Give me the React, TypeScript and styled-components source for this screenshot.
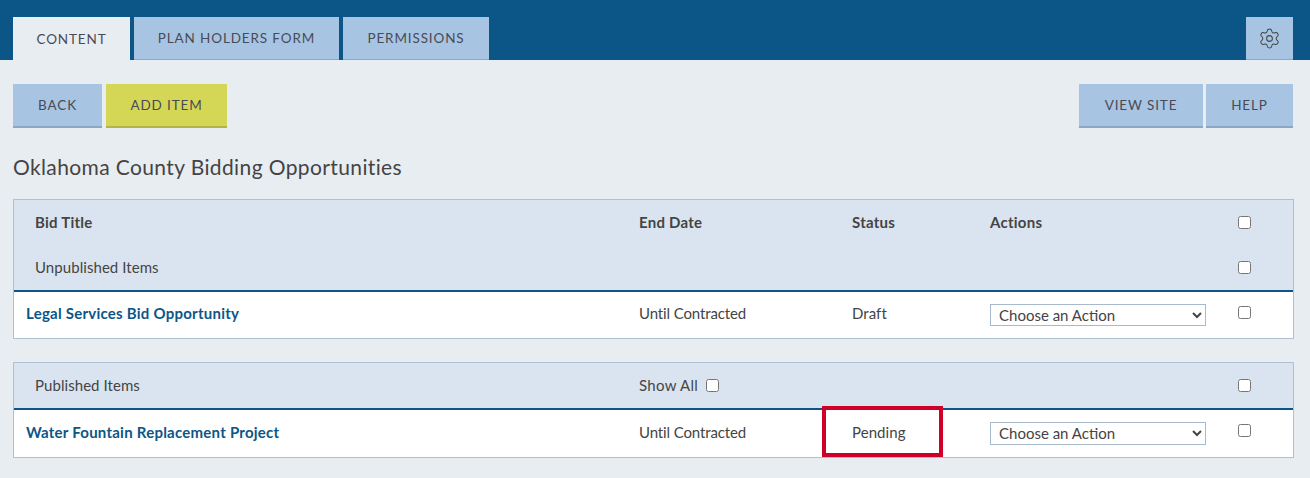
import React from "react";
import styled, { createGlobalStyle } from "styled-components";
import { Settings } from "lucide-react";

const Global = createGlobalStyle`
  html, body { margin: 0; padding: 0; background: #e8edf2; }
  body { font-family: "Lato", "Open Sans", sans-serif; color: #444; font-size: 15px; }
`;

const Page = styled.div`
  width: 1310px;
  height: 478px;
  overflow: hidden;
  position: relative;
`;

const TopBar = styled.header`
  height: 60px;
  box-sizing: border-box;
  padding: 17px 17px 0 13px;
  background: #0b5687;
  display: flex;
  justify-content: space-between;
`;

const Tabs = styled.nav`
  display: flex;
  gap: 4px;
`;

const Tab = styled.a<{ $active?: boolean; $w: number }>`
  width: ${p => p.$w}px;
  height: 43px;
  box-sizing: border-box;
  display: flex;
  align-items: center;
  justify-content: center;
  font-size: 13.5px;
  letter-spacing: 0.86px;
  color: #4a4a55;
  background: ${p => (p.$active ? "#e8edf2" : "#a7c5e3")};
  border-bottom: ${p => (p.$active ? "none" : "1px solid #8ba7c4")};
`;

const GearButton = styled.button`
  width: 47px;
  height: 43px;
  border: 0;
  border-bottom: 1px solid #8ba7c4;
  padding: 0;
  background: #a7c5e3;
  color: #444;
  display: flex;
  align-items: center;
  justify-content: center;
`;

const Content = styled.main`
  padding: 24px 17px 0 13px;
`;

const Toolbar = styled.div`
  display: flex;
  justify-content: space-between;
`;

const ButtonGroup = styled.div<{ $gap: number }>`
  display: flex;
  gap: ${p => p.$gap}px;
`;

const ActionButton = styled.a<{ $w: number; $accent?: boolean }>`
  width: ${p => p.$w}px;
  height: 44px;
  box-sizing: border-box;
  display: flex;
  align-items: center;
  justify-content: center;
  font-size: 13.5px;
  letter-spacing: 0.86px;
  color: #4a4a55;
  background: ${p => (p.$accent ? "#d4d755" : "#a7c5e3")};
  border-bottom: 2px solid ${p => (p.$accent ? "#b3b548" : "#8ba7c4")};
`;

const Title = styled.h1`
  margin: 25px 0 18px;
  font-size: 21px;
  line-height: 28px;
  font-weight: 400;
  color: #444;
  letter-spacing: 0.38px;
`;

const Panel = styled.section<{ $mt?: number }>`
  width: 1281px;
  box-sizing: border-box;
  margin-top: ${p => p.$mt ?? 0}px;
  border: 1px solid #b0c0d4;
  background: #fff;
`;

const Row = styled.div<{ $head?: boolean; $h: number; $rule?: boolean }>`
  display: grid;
  grid-template-columns: 625px 213px 138px 248px 55px;
  align-items: center;
  height: ${p => p.$h}px;
  background: ${p => (p.$head ? "#dae4f0" : "#fff")};
  border-bottom: ${p => (p.$rule ? "2px solid #0b5687" : "none")};
`;

const Heading = styled.div<{ $inset?: boolean }>`
  font-weight: 700;
  letter-spacing: 0.25px;
  margin-top: -2px;
  padding-left: ${p => (p.$inset ? 21 : 0)}px;
`;

const Cell = styled.div<{ $inset?: boolean }>`
  padding-left: ${p => (p.$inset ? 21 : 0)}px;
  margin-top: -2px;
  display: flex;
  align-items: center;
  gap: 8px;
  letter-spacing: 0.06px;
`;

const ShowAllCell = styled(Cell)`
  letter-spacing: 0.3px;
`;

const BodyCell = styled(Cell)`
  margin-top: -4px;
`;

const DateCell = styled(BodyCell)`
  letter-spacing: -0.12px;
`;

const ItemLink = styled.a`
  padding-left: 12px;
  font-weight: 700;
  letter-spacing: 0.24px;
  color: #0b5687;
  margin-top: -4px;
`;

const Check = styled.input.attrs({ type: "checkbox" })`
  width: 13px;
  height: 13px;
  margin: 0;
  display: block;
`;

const ShowAllCheck = styled(Check)`
  margin-top: 2px;
`;

const CheckCell = styled.div<{ $lift?: number }>`
  margin-top: ${p => p.$lift ?? 0}px;
`;

const SelectCell = styled.div`
  display: flex;
`;

const ActionSelect = styled.select<{ $h: number }>`
  width: 216px;
  height: ${p => p.$h}px;
  box-sizing: border-box;
  border: 1px solid #a9b9cc;
  background: #fff;
  color: #444;
  font: inherit;
  padding: 0 4px 2px;
  border-radius: 0;
`;

const Highlight = styled.div`
  position: absolute;
  left: 822px;
  top: 406px;
  width: 121px;
  height: 51px;
  box-sizing: border-box;
  border: 4px solid #ce0029;
  pointer-events: none;
`;

const Picker = ({ h }: { h: number }) => (
  <SelectCell>
    <ActionSelect $h={h} defaultValue="a">
      <option value="a">Choose an Action</option>
    </ActionSelect>
  </SelectCell>
);

export default function App() {
  return (
    <Page>
      <Global />
      <TopBar>
        <Tabs>
          <Tab $active $w={117}>CONTENT</Tab>
          <Tab $w={205}>PLAN HOLDERS FORM</Tab>
          <Tab $w={146}>PERMISSIONS</Tab>
        </Tabs>
        <GearButton aria-label="Settings">
          <Settings size={23} strokeWidth={1.05} />
        </GearButton>
      </TopBar>
      <Content>
        <Toolbar>
          <ButtonGroup $gap={4}>
            <ActionButton $w={89}>BACK</ActionButton>
            <ActionButton $w={121} $accent>ADD ITEM</ActionButton>
          </ButtonGroup>
          <ButtonGroup $gap={3}>
            <ActionButton $w={124}>VIEW SITE</ActionButton>
            <ActionButton $w={87}>HELP</ActionButton>
          </ButtonGroup>
        </Toolbar>
        <Title>Oklahoma County Bidding Opportunities</Title>
        <Panel>
          <Row $head $h={45}>
            <Heading $inset>Bid Title</Heading>
            <Heading>End Date</Heading>
            <Heading>Status</Heading>
            <Heading>Actions</Heading>
            <CheckCell><Check /></CheckCell>
          </Row>
          <Row $head $h={45} $rule>
            <Cell $inset>Unpublished Items</Cell>
            <div />
            <div />
            <div />
            <CheckCell><Check /></CheckCell>
          </Row>
          <Row $h={46}>
            <ItemLink>Legal Services Bid Opportunity</ItemLink>
            <DateCell>Until Contracted</DateCell>
            <BodyCell>Draft</BodyCell>
            <Picker h={22} />
            <CheckCell $lift={-5}><Check /></CheckCell>
          </Row>
        </Panel>
        <Panel $mt={23}>
          <Row $head $h={45} $rule>
            <Cell $inset>Published Items</Cell>
            <ShowAllCell>Show All <ShowAllCheck /></ShowAllCell>
            <div />
            <div />
            <CheckCell><Check /></CheckCell>
          </Row>
          <Row $h={47}>
            <ItemLink>Water Fountain Replacement Project</ItemLink>
            <DateCell>Until Contracted</DateCell>
            <BodyCell>Pending</BodyCell>
            <Picker h={23} />
            <CheckCell $lift={-6}><Check /></CheckCell>
          </Row>
        </Panel>
      </Content>
      <Highlight />
    </Page>
  );
}
